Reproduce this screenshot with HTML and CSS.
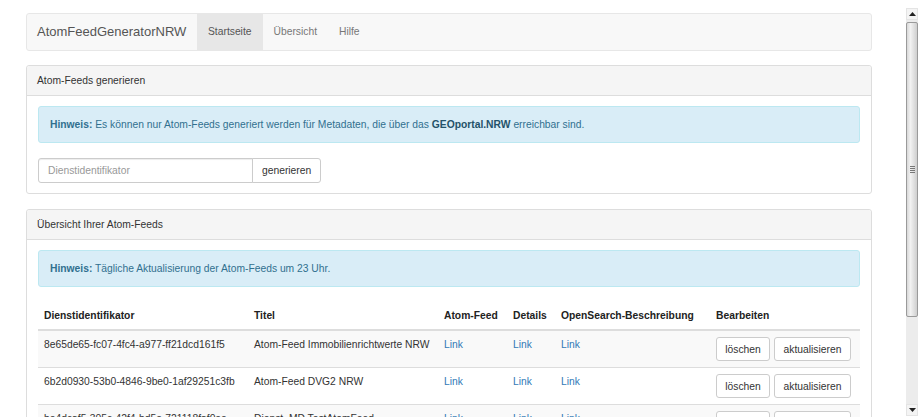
FILE: index.html
```html
<!DOCTYPE html>
<html lang="de">
<head>
<meta charset="utf-8">
<title>AtomFeedGeneratorNRW</title>
<link rel="stylesheet" href="styles.css">
</head>
<body>
<div class="window">
  <main class="page">
    <nav class="navbar">
      <span class="brand">AtomFeedGeneratorNRW</span>
      <ul class="nav">
        <li class="active"><a>Startseite</a></li>
        <li><a>Übersicht</a></li>
        <li><a>Hilfe</a></li>
      </ul>
    </nav>

    <section class="panel">
      <div class="panel-heading">Atom-Feeds generieren</div>
      <div class="panel-body">
        <div class="alert"><strong>Hinweis:</strong> Es können nur Atom-Feeds generiert werden für Metadaten, die über das <a class="alert-link">GEOportal.NRW</a> erreichbar sind.</div>
        <div class="input-group">
          <input class="form-control" type="text" placeholder="Dienstidentifikator">
          <button class="btn btn-addon">generieren</button>
        </div>
      </div>
    </section>

    <section class="panel">
      <div class="panel-heading">Übersicht Ihrer Atom-Feeds</div>
      <div class="panel-body">
        <div class="alert"><strong>Hinweis:</strong> Tägliche Aktualisierung der Atom-Feeds um 23 Uhr.</div>
        <table class="table">
          <colgroup>
            <col class="c1"><col class="c2"><col class="c3"><col class="c4"><col class="c5"><col class="c6">
          </colgroup>
          <thead>
            <tr><th>Dienstidentifikator</th><th>Titel</th><th>Atom-Feed</th><th>Details</th><th>OpenSearch-Beschreibung</th><th>Bearbeiten</th></tr>
          </thead>
          <tbody>
            <tr>
              <td>8e65de65-fc07-4fc4-a977-ff21dcd161f5</td>
              <td>Atom-Feed Immobilienrichtwerte NRW</td>
              <td><a>Link</a></td><td><a>Link</a></td><td><a>Link</a></td>
              <td class="actions"><button class="btn">löschen</button><button class="btn">aktualisieren</button></td>
            </tr>
            <tr>
              <td>6b2d0930-53b0-4846-9be0-1af29251c3fb</td>
              <td>Atom-Feed DVG2 NRW</td>
              <td><a>Link</a></td><td><a>Link</a></td><td><a>Link</a></td>
              <td class="actions"><button class="btn">löschen</button><button class="btn">aktualisieren</button></td>
            </tr>
            <tr>
              <td>be4dcaf5-305c-42f4-bd5e-721118faf0ee</td>
              <td>Dienst_MD TestAtomFeed</td>
              <td><a>Link</a></td><td><a>Link</a></td><td><a>Link</a></td>
              <td class="actions"><button class="btn">löschen</button><button class="btn">aktualisieren</button></td>
            </tr>
          </tbody>
        </table>
      </div>
    </section>
  </main>

  <div class="scrollbar">
    <div class="sb-arrow sb-up"><svg width="7" height="4" viewBox="0 0 7 4"><path d="M0 4 L3.5 0 L7 4 Z" fill="#222"/></svg></div>
    <div class="sb-track">
      <div class="sb-thumb"><span class="grip"></span></div>
    </div>
    <div class="sb-arrow sb-down"><svg width="7" height="4" viewBox="0 0 7 4"><path d="M0 0 L7 0 L3.5 4 Z" fill="#222"/></svg></div>
  </div>
</div>
</body>
</html>
```

FILE: styles.css
```css
* { box-sizing: border-box; }
html, body { margin: 0; padding: 0; }
body {
  font-family: "Liberation Sans", Arial, sans-serif;
  font-size: 10.3px;
  line-height: 15px;
  color: #333;
  background: #fff;
}
.window {
  display: flex;
  height: 417px;
  overflow: hidden;
}
.page {
  width: 906px;
  padding: 13px 34px 0 26px;
}
a { color: #337ab7; text-decoration: none; }

/* navbar */
.navbar {
  display: flex;
  height: 38px;
  background: #f8f8f8;
  border: 1px solid #e7e7e7;
  border-radius: 3px;
  margin-bottom: 14px;
}
.brand {
  font-size: 13px;
  line-height: 36px;
  color: #555;
  padding: 0 10px;
  width: 170px;
}
.nav { list-style: none; margin: 0; padding: 0; display: flex; }
.nav li a {
  display: block;
  padding: 0 11px;
  line-height: 36px;
  color: #777;
}
.nav li.active a { background: #e7e7e7; color: #555; }

/* panels */
.panel {
  border: 1px solid #ddd;
  border-radius: 3px;
  margin-bottom: 15px;
  background: #fff;
}
.panel-heading {
  background: #f5f5f5;
  border-bottom: 1px solid #ddd;
  padding: 7px 10px;
  line-height: 15px;
  border-radius: 3px 3px 0 0;
}
.panel-body { padding: 10px 11px 10px 11px; }

.alert {
  background: #d9edf7;
  border: 1px solid #bce8f1;
  color: #31708f;
  border-radius: 3px;
  padding: 10px 11px;
  margin-bottom: 15px;
}
.alert strong, .alert-link { font-weight: bold; }
.alert-link { color: #245269; }

/* input group */
.input-group { display: flex; }
.form-control {
  width: 215px;
  height: 25px;
  border: 1px solid #ccc;
  border-radius: 3px 0 0 3px;
  padding: 4px 9px;
  font: inherit;
  color: #555;
  box-shadow: inset 0 1px 1px rgba(0,0,0,.075);
}
.form-control::placeholder { color: #999; }
.btn {
  font: inherit;
  height: 24px;
  padding: 0 9px;
  border: 1px solid #ccc;
  border-radius: 3px;
  background: #fff;
  color: #333;
}
.btn-addon {
  height: 25px;
  width: 69px;
  border-radius: 0 3px 3px 0;
  margin-left: -1px;
}

/* table */
.table {
  width: 822px;
  border-collapse: collapse;
  table-layout: fixed;
}
.c1 { width: 210px; }
.c2 { width: 190px; }
.c3 { width: 69px; }
.c4 { width: 48px; }
.c5 { width: 155px; }
.c6 { width: 150px; }
.table th {
  text-align: left;
  font-weight: bold;
  padding: 6px;
  border-bottom: 2px solid #ddd;
  white-space: nowrap;
  color: #222;
}
.table td {
  padding: 6px;
  vertical-align: top;
  border-top: 1px solid #ddd;
  white-space: nowrap;
  height: 36px;
}
.table tbody tr:nth-child(odd) td { background: #f9f9f9; }
.table thead + tbody tr:first-child td { border-top: 0; }
.actions .btn + .btn { margin-left: 4px; }
.actions .btn:first-child { width: 54px; padding: 0; }
.actions .btn:last-child { width: 77px; padding: 0; }

/* scrollbar */
.scrollbar {
  width: 12px;
  display: flex;
  flex-direction: column;
  padding-top: 8px;
  padding-bottom: 1px;
}
.sb-arrow {
  height: 12px;
  display: flex;
  align-items: center;
  justify-content: center;
  background: #f4f4f4;
  border: 1px solid #e4e4e4;
}
.sb-track {
  flex: 1;
  background: #ececec;
  padding-top: 2px;
}
.sb-thumb {
  height: 295px;
  border: 1px solid #9a9a9a;
  border-radius: 2px;
  background: linear-gradient(to right, #d8d8d8, #f2f2f2 35%, #cfcfcf 100%);
  display: flex;
  align-items: center;
  justify-content: center;
}
.grip {
  width: 5px;
  height: 7px;
  background: repeating-linear-gradient(to bottom, #777 0 1px, transparent 1px 2px);
}
```
